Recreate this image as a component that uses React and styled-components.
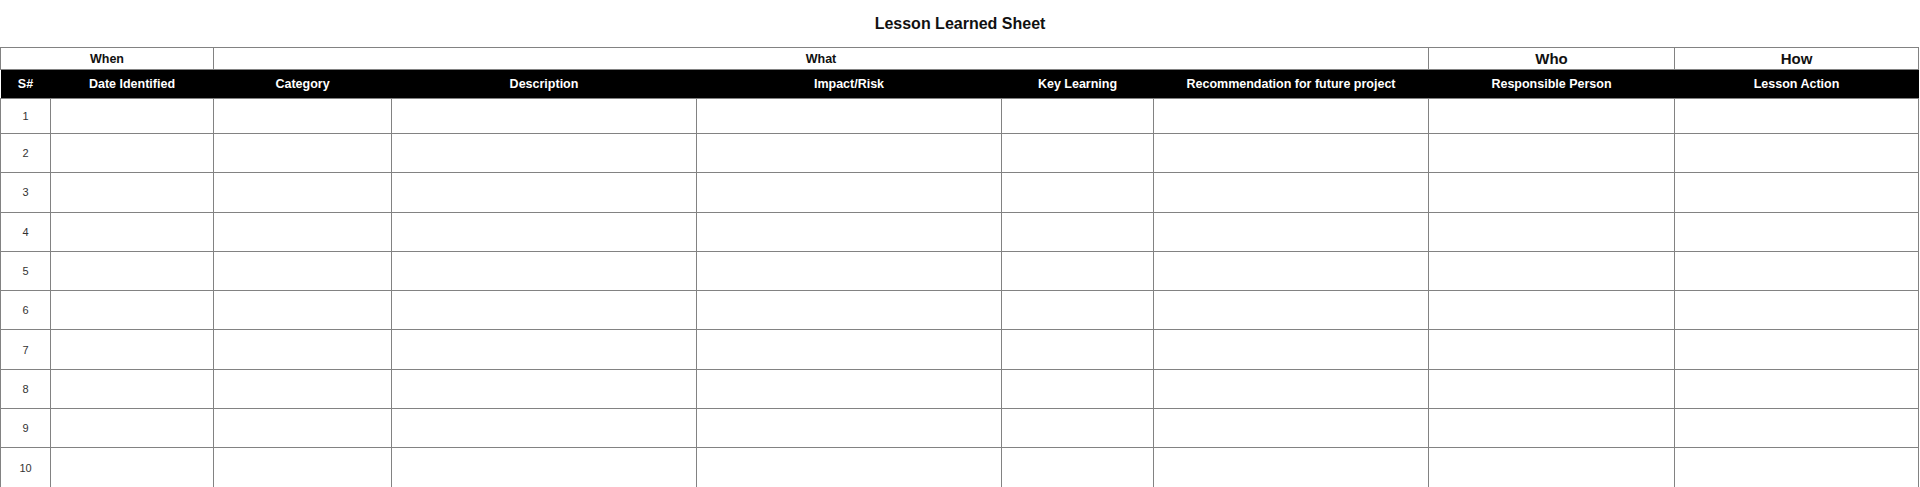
import React from 'react';
import styled, { createGlobalStyle } from 'styled-components';

const GlobalStyle = createGlobalStyle`
  html, body {
    margin: 0;
    padding: 0;
    background: #fff;
  }
  body {
    font-family: "Liberation Sans", Arial, sans-serif;
    color: #111;
  }
`;

const LINE = '#828282';

const columns = [
  { key: 'sn', label: 'S#', width: 50 },
  { key: 'date', label: 'Date Identified', width: 163 },
  { key: 'category', label: 'Category', width: 178 },
  { key: 'description', label: 'Description', width: 305 },
  { key: 'impact', label: 'Impact/Risk', width: 305 },
  { key: 'learning', label: 'Key Learning', width: 152 },
  { key: 'recommendation', label: 'Recommendation for future project', width: 275 },
  { key: 'person', label: 'Responsible Person', width: 246 },
  { key: 'action', label: 'Lesson Action', width: 244 },
];

const groups = [
  { label: 'When', span: 2, big: false },
  { label: 'What', span: 5, big: false },
  { label: 'Who', span: 1, big: true },
  { label: 'How', span: 1, big: true },
];

const Page = styled.div`
  width: 1920px;
  display: flex;
  flex-direction: column;
`;

const Title = styled.h1`
  margin: 0;
  height: 47px;
  display: flex;
  align-items: center;
  justify-content: center;
  font-size: 16px;
  font-weight: 700;
  color: #111;
  padding-top: 1px;
  box-sizing: border-box;
`;

const Table = styled.table`
  width: 1919px;
  table-layout: fixed;
  border-collapse: collapse;
`;

const GroupCell = styled.th`
  height: 21px;
  padding: 0;
  border: 1px solid ${LINE};
  font-size: ${props => (props.$big ? '15px' : '12.5px')};
  font-weight: 700;
  color: #111;
  text-align: center;
  vertical-align: middle;
`;

const HeadCell = styled.th`
  height: 28px;
  padding: 0;
  background: #000;
  color: #fff;
  border-top: 1px solid ${LINE};
  border-bottom: 1px solid ${LINE};
  font-size: 12.5px;
  font-weight: 700;
  text-align: center;
  vertical-align: middle;
  white-space: nowrap;
`;

const Row = styled.tr`
  height: ${props => (props.$first ? '35px' : '39.3px')};
`;

const Cell = styled.td`
  padding: 0;
  border: 1px solid ${LINE};
`;

const NumCell = styled(Cell)`
  text-align: center;
  vertical-align: middle;
  font-size: 11px;
  color: #333;
`;

const rows = Array.from({ length: 10 }, (_, i) => i + 1);

export default function App() {
  return (
    <Page>
      <GlobalStyle />
      <Title>Lesson Learned Sheet</Title>
      <Table>
        <colgroup>
          {columns.map(c => <col key={c.key} style={{ width: c.width }} />)}
        </colgroup>
        <thead>
          <tr>
            {groups.map(g => (
              <GroupCell key={g.label} colSpan={g.span} $big={g.big}>{g.label}</GroupCell>
            ))}
          </tr>
          <tr>
            {columns.map(c => <HeadCell key={c.key}>{c.label}</HeadCell>)}
          </tr>
        </thead>
        <tbody>
          {rows.map(n => (
            <Row key={n} $first={n === 1}>
              <NumCell>{n}</NumCell>
              {columns.slice(1).map(c => <Cell key={c.key} />)}
            </Row>
          ))}
        </tbody>
      </Table>
    </Page>
  );
}
